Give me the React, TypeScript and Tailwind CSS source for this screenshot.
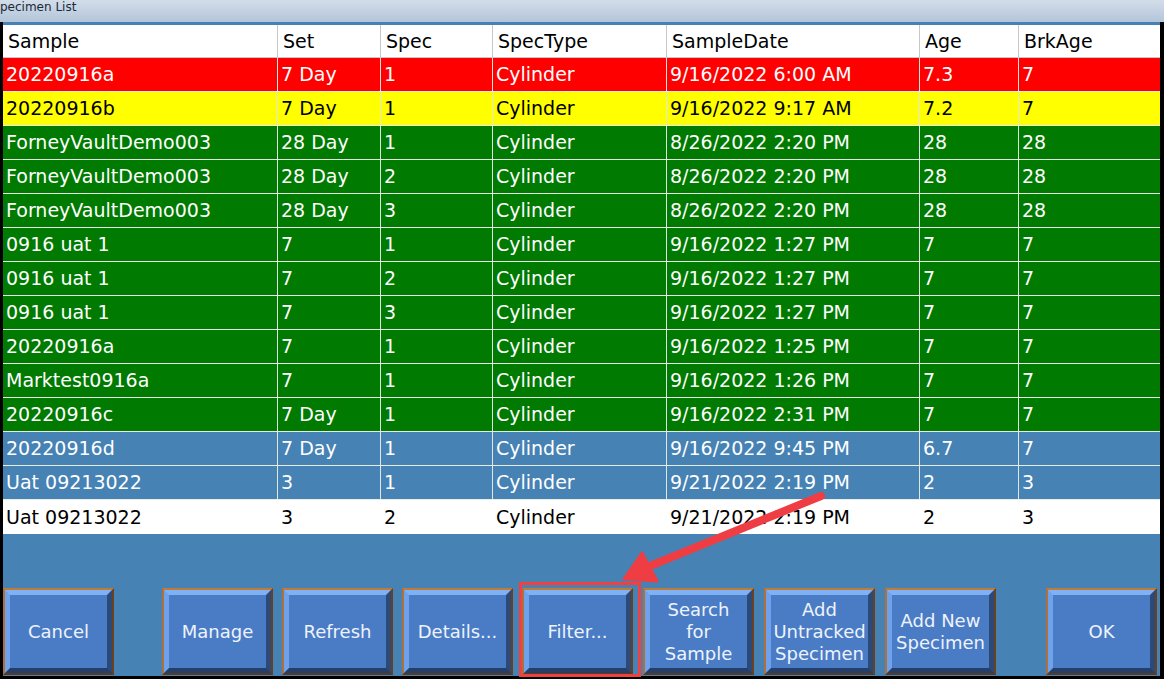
import React from 'react';

type Row = {
  sample: string;
  set: string;
  spec: string;
  specType: string;
  date: string;
  age: string;
  brk: string;
  tone: 'red' | 'yellow' | 'green' | 'blue' | 'white';
};

const rows: Row[] = [
  { sample: '20220916a', set: '7 Day', spec: '1', specType: 'Cylinder', date: '9/16/2022 6:00 AM', age: '7.3', brk: '7', tone: 'red' },
  { sample: '20220916b', set: '7 Day', spec: '1', specType: 'Cylinder', date: '9/16/2022 9:17 AM', age: '7.2', brk: '7', tone: 'yellow' },
  { sample: 'ForneyVaultDemo003', set: '28 Day', spec: '1', specType: 'Cylinder', date: '8/26/2022 2:20 PM', age: '28', brk: '28', tone: 'green' },
  { sample: 'ForneyVaultDemo003', set: '28 Day', spec: '2', specType: 'Cylinder', date: '8/26/2022 2:20 PM', age: '28', brk: '28', tone: 'green' },
  { sample: 'ForneyVaultDemo003', set: '28 Day', spec: '3', specType: 'Cylinder', date: '8/26/2022 2:20 PM', age: '28', brk: '28', tone: 'green' },
  { sample: '0916 uat 1', set: '7', spec: '1', specType: 'Cylinder', date: '9/16/2022 1:27 PM', age: '7', brk: '7', tone: 'green' },
  { sample: '0916 uat 1', set: '7', spec: '2', specType: 'Cylinder', date: '9/16/2022 1:27 PM', age: '7', brk: '7', tone: 'green' },
  { sample: '0916 uat 1', set: '7', spec: '3', specType: 'Cylinder', date: '9/16/2022 1:27 PM', age: '7', brk: '7', tone: 'green' },
  { sample: '20220916a', set: '7', spec: '1', specType: 'Cylinder', date: '9/16/2022 1:25 PM', age: '7', brk: '7', tone: 'green' },
  { sample: 'Marktest0916a', set: '7', spec: '1', specType: 'Cylinder', date: '9/16/2022 1:26 PM', age: '7', brk: '7', tone: 'green' },
  { sample: '20220916c', set: '7 Day', spec: '1', specType: 'Cylinder', date: '9/16/2022 2:31 PM', age: '7', brk: '7', tone: 'green' },
  { sample: '20220916d', set: '7 Day', spec: '1', specType: 'Cylinder', date: '9/16/2022 9:45 PM', age: '6.7', brk: '7', tone: 'blue' },
  { sample: 'Uat 09213022', set: '3', spec: '1', specType: 'Cylinder', date: '9/21/2022 2:19 PM', age: '2', brk: '3', tone: 'blue' },
  { sample: 'Uat 09213022', set: '3', spec: '2', specType: 'Cylinder', date: '9/21/2022 2:19 PM', age: '2', brk: '3', tone: 'white' },
];

const widths = ['w-[275px]', 'w-[103px]', 'w-[112px]', 'w-[174px]', 'w-[253px]', 'w-[99px]', 'flex-1'];
const headers = ['Sample', 'Set', 'Spec', 'SpecType', 'SampleDate', 'Age', 'BrkAge'];

const toneClass: Record<Row['tone'], string> = {
  red: 'bg-[#ff0000] text-white',
  yellow: 'bg-[#ffff00] text-black',
  green: 'bg-[#007a00] text-white',
  blue: 'bg-[#4682b4] text-white',
  white: 'bg-white text-black',
};

const Btn: React.FC<{ label: React.ReactNode; className?: string }> = ({ label, className = '' }) => (
  <div className={`h-[87px] w-[111px] shrink-0 border-2 border-t-[#c07a3a] border-l-[#b0703a] border-r-[#6a4020] border-b-[#5a3a20] ${className}`}>
    <div className="flex h-full w-full items-center justify-center border-[5px] border-t-[#7eb2f4] border-l-[#6ea2ec] border-r-[#2c4a78] border-b-[#263f68] bg-[#4a7cc6] text-center text-[18px] leading-[22px] text-[#eef3fb]">
      {label}
    </div>
  </div>
);

export default function App() {
  return (
    <div className="relative h-[679px] w-[1164px] overflow-hidden bg-black font-['DejaVu_Sans',sans-serif]">
      <div className="flex h-full flex-col pl-[3px] pr-[4px] pb-[3px]">
        {/* title bar */}
        <div className="-ml-[3px] -mr-[4px] flex h-[22px] items-start bg-gradient-to-b from-[#d3dde9] to-[#b3c5da] pt-px text-[12px] leading-[13px] text-[#1a2a3a]">
          <span>pecimen List</span>
        </div>
        <div className="flex flex-1 flex-col bg-[#4682b4] pt-[3px]">
          {/* header */}
          <div className="flex h-[33px] border-b border-[#c8c8c8] bg-white text-[19px] text-black">
            {headers.map((h, i) => (
              <div key={h} className={`${widths[i]} flex items-center border-r border-[#c8c8c8] pl-[5px] last:border-r-0`}>
                {h}
              </div>
            ))}
          </div>
          {rows.map((r, idx) => {
            const cells = [r.sample, r.set, r.spec, r.specType, r.date, r.age, r.brk];
            const sep = r.tone === 'white' ? 'border-transparent' : 'border-[#dfe8df]';
            return (
              <div key={idx} className={`flex h-[34px] text-[19px] ${toneClass[r.tone]} ${r.tone === 'white' ? '' : 'border-b border-[#e6eee6]'}`}>
                {cells.map((c, i) => (
                  <div key={i} className={`${widths[i]} flex items-center border-r ${sep} pl-[3px] last:border-r-0`}>
                    {c}
                  </div>
                ))}
              </div>
            );
          })}
          {/* buttons */}
          <div className="mt-auto flex items-end pb-[1px]">
            <Btn label="Cancel" />
            <Btn label="Manage" className="ml-[48px]" />
            <Btn label="Refresh" className="ml-[9px]" />
            <Btn label="Details..." className="ml-[9px]" />
            <Btn label="Filter..." className="ml-[9px]" />
            <Btn label={<>Search<br />for<br />Sample</>} className="ml-[10px]" />
            <Btn label={<>Add<br />Untracked<br />Specimen</>} className="ml-[10px]" />
            <Btn label={<>Add New<br />Specimen</>} className="ml-[10px]" />
            <Btn label="OK" className="ml-[50px]" />
          </div>
        </div>
      </div>

      {/* annotation: highlight box */}
      <div className="absolute left-[519px] top-[582px] h-[95px] w-[122px] border-[3px] border-[#f04040]" />
      {/* annotation: arrow */}
      <svg className="absolute left-0 top-0" width="1164" height="679" viewBox="0 0 1164 679">
        <line x1="821" y1="496" x2="650" y2="566" stroke="#ee3e44" strokeWidth="8" strokeLinecap="round" />
        <polygon points="624,579 642,553 657,581" fill="#ee3e44" stroke="#ee3e44" strokeWidth="3" strokeLinejoin="round" />
      </svg>
    </div>
  );
}
